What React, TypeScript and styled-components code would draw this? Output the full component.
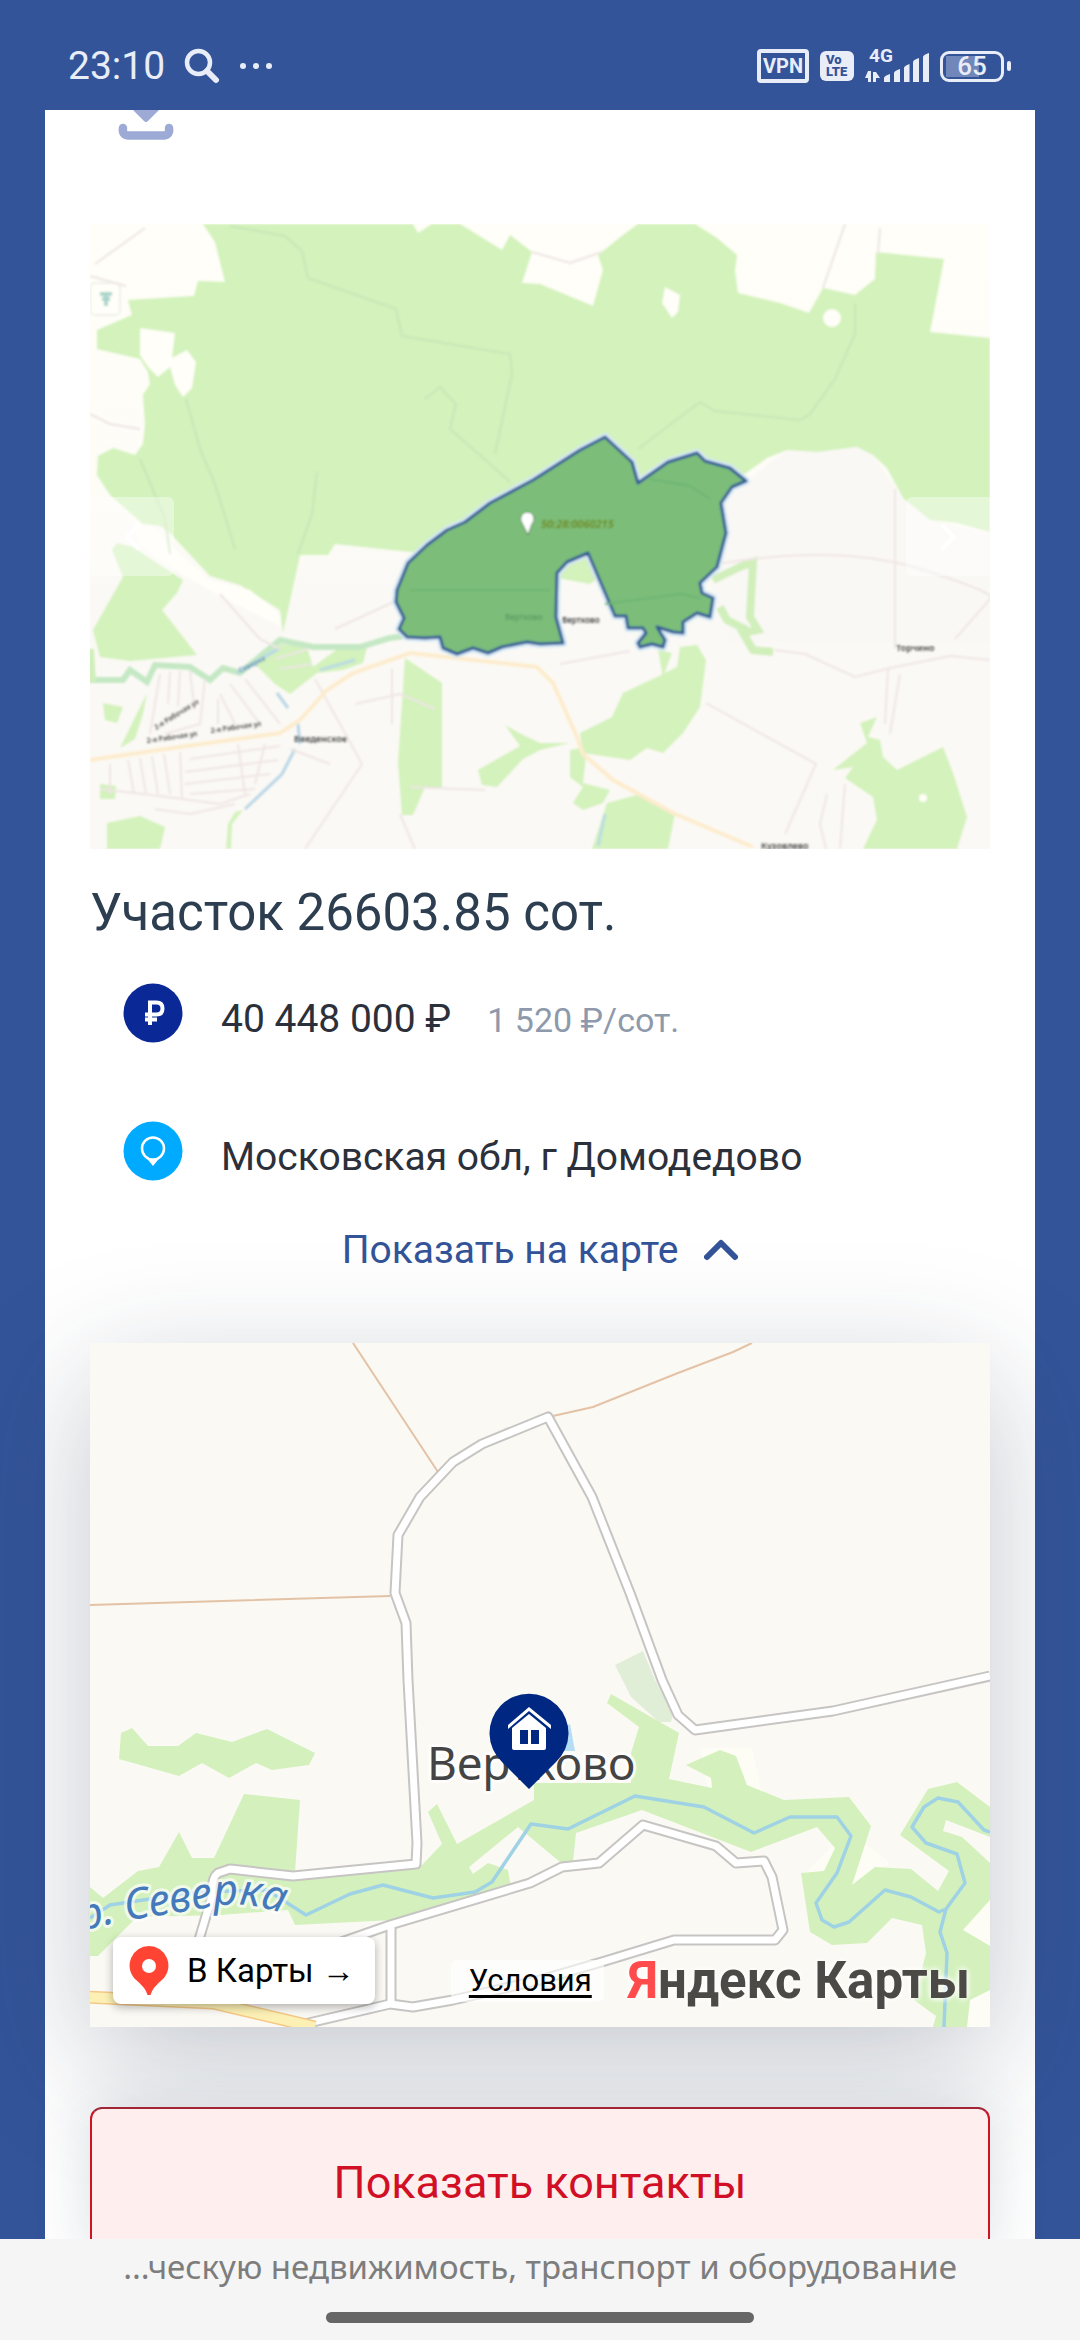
import React, { useState } from "react";
import styled, { createGlobalStyle } from "styled-components";

const GlobalStyle = createGlobalStyle`
  * { box-sizing: border-box; }
  body { margin: 0; background: #335499; font-family: Roboto, "Noto Sans", sans-serif; }
  button { font: inherit; border: 0; padding: 0; cursor: pointer; }
`;

const Screen = styled.div`
  display: flex;
  flex-direction: column;
  height: 100vh;
  background: #335499;
`;

/* ---------- status bar ---------- */

const StatusBar = styled.header`
  display: flex;
  flex: none;
  align-items: center;
  justify-content: space-between;
  height: 110px;
  padding: 22px 76px 0 68px;
  color: #e9edf8;
`;

const StatusGroup = styled.div<{ $gap: number }>`
  display: flex;
  align-items: center;
  gap: ${(p) => p.$gap}px;
`;

const Clock = styled.span`
  font-size: 39px;
  line-height: 44px;
`;

const VpnBadge = styled.span`
  width: 52px;
  border: 4px solid #e9edf8;
  border-radius: 4px;
  font-size: 20px;
  font-weight: 700;
  line-height: 26px;
  text-align: center;
`;

const VolteBadge = styled.span`
  display: flex;
  flex-direction: column;
  width: 34px;
  height: 30px;
  padding: 3px 6px;
  border-radius: 6px;
  background: #e9edf8;
  color: #335499;
  font-size: 13px;
  font-weight: 900;
  line-height: 12px;
`;

const Battery = styled.span`
  position: relative;
  display: flex;
  align-items: center;
  justify-content: center;
  width: 64px;
  height: 31px;
  border: 3px solid #e9edf8;
  border-radius: 9px;
  font-size: 26px;
  font-weight: 500;
  line-height: 26px;
  background: linear-gradient(#7186b9, #7186b9) 3px 2px / 33px 21px no-repeat;

  &::after {
    content: "";
    position: absolute;
    right: -10px;
    width: 4px;
    height: 10px;
    border-radius: 2px;
    background: #e9edf8;
  }
`;

/* ---------- listing card ---------- */

const Scroller = styled.main`
  flex: 1;
  min-height: 0;
  padding: 0 45px;
  overflow: hidden;
`;

const Card = styled.article`
  min-height: 100%;
  padding: 0 45px 90px;
  background: #fff;
`;

const Toolbar = styled.div`
  height: 114px;
  padding-left: 28px;
`;

const DownloadButton = styled.button`
  display: block;
  background: none;
`;

const Photo = styled.figure`
  position: relative;
  margin: 0;
  aspect-ratio: 900 / 625;
  overflow: hidden;

  & > svg { display: block; width: 100%; height: 100%; }
`;

const SlideButton = styled.button<{ $side: "left" | "right" }>`
  position: absolute;
  top: 273px;
  ${(p) => p.$side}: 0;
  display: flex;
  align-items: center;
  justify-content: center;
  width: 84px;
  height: 79px;
  border-radius: ${(p) => (p.$side === "left" ? "0 6px 6px 0" : "6px 0 0 6px")};
  background: rgba(255, 255, 255, 0.4);
`;

const Title = styled.h1`
  margin: 34px 0 40px;
  color: #2c3e50;
  font-size: 51px;
  font-weight: 400;
  line-height: 60px;
`;

const Facts = styled.div`
  display: flex;
  flex-direction: column;
  gap: 72px;
  padding-left: 33px;
`;

const Fact = styled.div`
  display: flex;
  gap: 38px;
`;

const FactText = styled.p`
  margin: 0;
  padding-top: 6px;
  color: #2b303b;
  font-size: 39px;
  line-height: 60px;
`;

const UnitPrice = styled.span`
  margin-left: 36px;
  color: #8e99ab;
  font-size: 34px;
  line-height: 34px;
`;

const MapToggle = styled.button`
  display: flex;
  align-items: center;
  gap: 26px;
  margin: 33px auto 63px;
  background: none;
  color: #335499;
  font-size: 39px;
  line-height: 60px;
`;

const MapPanel = styled.section`
  position: relative;
  aspect-ratio: 900 / 684;
  box-shadow: 0 36px 120px rgba(34, 48, 73, 0.27);

  & > svg { display: block; width: 100%; height: 100%; }
`;

const OpenMaps = styled.a`
  position: absolute;
  left: 23px;
  bottom: 23px;
  display: flex;
  align-items: center;
  gap: 18px;
  height: 67px;
  padding: 0 20px 0 16px;
  border-radius: 8px;
  background: #fff;
  box-shadow: 0 3px 10px rgba(0, 0, 0, 0.3);
  color: #000;
  font-size: 33px;
  text-decoration: none;
`;

const MapCredits = styled.div`
  position: absolute;
  right: 20px;
  bottom: 14px;
  display: flex;
  align-items: center;
  gap: 24px;
`;

const Terms = styled.a`
  padding: 0 12px 0 18px;
  border-radius: 6px;
  background: rgba(255, 255, 255, 0.6);
  color: #000;
  font-size: 31px;
  line-height: 42px;
  text-decoration: underline;
  text-decoration-thickness: 3px;
  text-underline-offset: 4px;
`;

const MapBrand = styled.span`
  color: #4b4a47;
  font-size: 51px;
  font-weight: 700;
  line-height: 64px;
  white-space: nowrap;
  text-shadow: 0 0 6px #fff, 0 0 6px #fff;
`;

const BrandInitial = styled.span`
  color: #ff4b4b;
`;

const ContactsButton = styled.button`
  position: relative;
  width: 100%;
  height: 150px;
  margin-top: 80px;
  border: 2px solid #cb1426;
  border-top-color: #a12535;
  border-radius: 12px;
  background: #feeeee;
  box-shadow: 0 0 60px rgba(34, 48, 73, 0.16);
  color: #d10f25;
  font-size: 45px;
`;

/* ---------- bottom bar ---------- */

const BottomBar = styled.footer`
  position: relative;
  display: flex;
  flex: none;
  flex-direction: column;
  align-items: center;
  justify-content: space-between;
  height: 101px;
  padding: 8px 0 17px;
  background: #f5f5f5;
  color: #7d7d7d;
  font-family: "Noto Sans", sans-serif;
  font-size: 33px;
  line-height: 40px;
  white-space: nowrap;
`;

const HomeHandle = styled.span`
  width: 428px;
  height: 11px;
  border-radius: 6px;
  background: #666;
`;

/* ---------- drawings ---------- */

const SearchIcon = () => (
  <svg width="36" height="36" viewBox="0 0 36 36" fill="none" stroke="#e9edf8" strokeWidth="4.5" strokeLinecap="round">
    <circle cx="14.500" cy="14.500" r="11.500" />
    <path d="M23 23L32 32" strokeWidth="6" />
  </svg>
);

const DotsIcon = () => (
  <svg width="34" height="8" viewBox="0 0 34 8" fill="#e9edf8">
    <circle cx="4" cy="4" r="3" />
    <circle cx="17" cy="4" r="3" />
    <circle cx="30" cy="4" r="3" />
  </svg>
);

const SignalIcon = () => (
  <svg width="64" height="40" viewBox="0 -4 64 40" fill="#e9edf8">
    <text x="4" y="12" fontFamily="Roboto" fontSize="19" fontWeight="700">4G</text>
    <path d="M3 21h3v11H3v-4L0 28zM8 32h3v-4h4l-4-6H8z" />
    <path d="M19 28q0-2 6-4v8h-6zM29 23q0-2 6-4v13h-6zM39 18q0-2 5.500-4v18H39zM48 12q0-2 6-4v24h-6zM58 7q0-2 6-4v29h-6z" />
  </svg>
);

const DownloadIcon = () => (
  <svg width="56" height="30" viewBox="0 0 56 30">
    <path d="M15 0H41L30 11q-2 2-4 0z" fill="#9daad6" />
    <path d="M5 18q-1 7 5 7.500H46q6-.5 5-7.500" fill="none" stroke="#9daad6" strokeWidth="8.500" strokeLinecap="round" />
  </svg>
);

const RubleIcon = () => (
  <svg width="60" height="60" viewBox="0 0 60 60">
    <circle cx="30" cy="30" r="29.500" fill="#0a2896" />
    <path d="M27 42V19.500h6.500q6 0 6 6t-6 6H22M22 36.500h12" fill="none" stroke="#fff" strokeWidth="4" />
  </svg>
);

const PlaceIcon = () => (
  <svg width="60" height="60" viewBox="0 0 60 60">
    <circle cx="30" cy="30" r="29.500" fill="#00aaff" />
    <circle cx="30" cy="27.500" r="11" fill="none" stroke="#fff" strokeWidth="2.500" />
    <path d="M23.500 37q3.500 2 6.500 2t6.500-2L30 45z" fill="#fff" />
  </svg>
);

const Chevron = ({ d, w, h, color, width }: { d: string; w: number; h: number; color: string; width: number }) => (
  <svg width={w} height={h} viewBox={`0 0 ${w} ${h}`} fill="none" stroke={color} strokeWidth={width} strokeLinecap="round" strokeLinejoin="round">
    <path d={d} />
  </svg>
);

const RedPin = () => (
  <svg width="40" height="50" viewBox="0 0 40 50">
    <path d="M20 0a19.500 19.500 0 0 1 14 33q-11 9-12.500 16h-3Q17 42 6 33A19.500 19.500 0 0 1 20 0z" fill="#ff4433" />
    <circle cx="20" cy="20" r="7" fill="#fff" />
  </svg>
);

const FOREST = [
  "113,0 125,18 135,58 108,57 104,72 38,76 42,91 7,106 7,125 50,135 58,148 60,160 53,171 55,200 53,220 45,231 23,224 8,232 7,251 20,271 53,300 70,302 80,309 120,352 150,361 190,386 193,409 210,331 238,331 245,320 330,329 500,360 663,244 677,234 697,226 727,228 767,223 783,231 797,244 813,274 840,296 867,299 900,308 900,114 840,108 854,35 786,28 785,55 765,71 733,64 719,89 690,79 648,69 645,47 647,31 627,14 605,0 548,0 533,11 508,31 513,46 503,82 450,60 432,59 442,28 420,11 412,26 370,0",
  "27,319 43,323 93,356 87,369 72,386 107,431 40,437 10,433 3,406 33,353 22,326",
  "165,440 190,420 217,423 223,443 253,421 277,423 273,439 253,446 227,449 200,470 185,460",
  "315,434 352,459 352,563 335,563 323,591 312,591 308,539",
  "415,501 433,511 450,519 480,519 450,526 433,535 407,563 392,561 388,546 430,522",
  "17,599 50,592 75,603 70,625 17,625",
  "57,469 30,524 45,515 53,490",
  "13,479 33,483 27,499 15,496",
  "10,560 26,562 25,575 10,575",
  "145,588 153,586 142,600 141,625 136,625 138,600",
  "590,423 607,421 616,436 610,483 593,509 573,529 557,524 540,536 493,529 490,509 522,493 533,469 567,453 587,443",
  "568,426 582,429 573,453",
  "517,579 547,571 585,589 578,625 502,625",
  "480,526 497,523 493,559 520,566 513,579 493,586 483,579 493,563 480,553",
  "787,493 770,499 777,519 743,546 763,543 755,554 783,573 787,596 773,625 867,625 877,593 863,549 853,523 807,546 793,533 790,516 778,513",
];

const PARCEL =
  "515,213 542,238 548,259 578,238 607,229 615,237 640,244 656,257 642,263 631,279 636,309 627,343 610,359 612,369 623,374 620,393 607,389 593,398 593,409 583,408 567,403 575,416 573,423 562,420 550,423 548,419 556,409 553,404 538,404 536,392 525,392 498,329 477,338 467,349 466,393 473,419 450,420 437,418 412,423 398,429 383,424 367,430 353,424 350,413 335,414 317,413 309,405 314,394 306,378 307,366 318,339 337,321 357,306 375,298 400,279 443,256 490,226";

const ParcelMap = () => (
  <svg viewBox="0 0 900 625" preserveAspectRatio="none" role="img" aria-label="Границы участка">
    <defs>
      <filter id="soft"><feGaussianBlur stdDeviation="0.9" /></filter>
      <linearGradient id="ground" x2="0" y2="1">
        <stop offset="0" stopColor="#fffef8" />
        <stop offset="0.45" stopColor="#fdfcf7" />
        <stop offset="0.6" stopColor="#fbf9f5" />
      </linearGradient>
    </defs>
    <rect width="900" height="625" fill="url(#ground)" />
    <g filter="url(#soft)">
      <path d="M697 226L767 223 783 231 813 274 840 296 900 310V420L640 420 600 300z" fill="#faf8f5" />
      <g fill="#d3f2bc">{FOREST.map((points) => <polygon key={points} points={points} />)}</g>
      <g fill="#fffef8">
        <polygon points="50,104 85,109 82,134 97,126 106,138 102,164 93,173 85,161 80,143 68,153 58,143 50,131" />
        <polygon points="575,63 590,71 588,88 582,94 572,79" />
        <polygon points="323,0 342,0 328,9" />
        <circle cx="742" cy="94" r="9" />
        <circle cx="833" cy="574" r="4" />
        <path d="M45 300L63 302 76 318 120 356 160 366 190 390 190 402 130 372 92 350 48 320z" />
        <rect x="0" y="59" width="30" height="32" rx="5" stroke="#eef2ea" strokeWidth="2" />
      </g>
      <path d="M10 70h12M12 75h8M16 68v14" stroke="#aad6cc" strokeWidth="4" fill="none" />
      <path d="M-10 456L33 456 40 446 57 458 65 441 100 443 120 456 133 444 150 449 190 416 223 423 270 423 300 414 315 412" fill="none" stroke="#c4e8c4" strokeWidth="6" />
      <path d="M623 356L650 343 663 338 660 393 668 406 653 409 663 426 683 428M630 383L637 396 657 406M0 425L2 458" fill="none" stroke="#d0efbb" strokeWidth="8" />
      <path d="M147 449L190 424M187 469L198 484M208 500L210 520M205 525L192 550 155 585" fill="none" stroke="#b9d6e6" strokeWidth="3" />
      <path d="M515 590L508 622M230 446L265 436" fill="none" stroke="#b9dce2" strokeWidth="3" />
      <g fill="none" stroke="#c9e6b6" strokeWidth="2">
        <path d="M140 2L195 12 212 27 218 54 306 85 312 112 420 130 422 150 405 230M420 258L400 240 360 205 366 180 350 163 335 175M96 175L110 225 125 260 145 325M50 235L75 295 80 330M227 248L222 290 208 330M610 178L625 187 710 196 720 190 745 155 765 110 765 80M610 178L548 225" />
      </g>
      <g fill="none" stroke="#eee5e4" strokeWidth="2">
        <path d="M5 40L55 4M0 52L36 62M442 28L480 39 512 28M755 0L733 64M790 4L788 30M805 265V425M627 340Q750 320 830 345T900 375L865 415M616 479L726 540 695 610M470 440L540 427M685 426L715 430 765 453 800 444 860 432 900 436M798 445L795 500M810 450L800 510M737 570L730 600 736 625M755 560L750 625M0 190L20 200 50 205M190 425L170 415 130 370M245 405L310 375" />
        <path d="M225 455L272 540 215 625M265 480L310 470 345 485M320 563L395 566M310 590L325 625M10 565L70 572 130 580 160 570M65 585L100 590 145 580" />
        <path d="M70 450L60 510M80 448L78 480M90 447L88 482M100 447L104 480M115 455L110 500 75 510M130 470L145 500M140 460L170 500M155 455L190 500M128 475L128 500M20 540V570M38 536L44 570M50 534L56 570M62 532L68 570M74 530L80 570M90 528L92 575M100 535L190 522M95 548L188 536M95 560L180 550M100 570L165 565M148 520L155 570M175 520L165 560M185 435L218 425M190 445L222 440M302 445V500M200 525L240 540" />
      </g>
      <path d="M0 536L90 523 190 509 210 496 237 466 263 449 320 429 447 443 463 459 487 513 493 530 523 556 583 589 663 623" fill="none" stroke="#fdeccd" strokeWidth="4" />
      <polygon points={PARCEL} fill="none" stroke="#d6eaf6" strokeWidth="8" strokeLinejoin="round" />
      <polygon points={PARCEL} fill="#7bbd79" stroke="#335c96" strokeWidth="3" strokeLinejoin="round" />
      <path d="M320 366H460M515 380L590 370 610 374M560 255L600 262 620 275" fill="none" stroke="#6fb573" strokeWidth="2" />
      <path d="M437 288a7 7 0 0 1 5 12l-4 11-6-12a7 7 0 0 1 5-11z" fill="#fff" stroke="#56875a" strokeWidth="1" />
      <g fontFamily="Noto Sans" fontSize="10" fontWeight="600" fill="#444">
        <text x="451" y="304" fontSize="11" fontStyle="italic" fill="#6f8600">50:28:0060215</text>
        <text x="415" y="396" fontSize="8" fill="#5e9a62">Вертково</text>
        <text x="472" y="399" fontSize="8">Вертково</text>
        <text x="204" y="518" fontSize="9">Введенское</text>
        <text x="806" y="427" fontSize="9">Торчино</text>
        <text x="671" y="625" fontSize="9">Кузовлево</text>
        <text transform="translate(66 506) rotate(-32)" fontSize="7">2-я Рабочая ул</text>
        <text transform="translate(57 519) rotate(-8)" fontSize="7">2-я Рабочая ул</text>
        <text transform="translate(121 509) rotate(-8)" fontSize="7">2-я Рабочая ул</text>
        <text transform="translate(150 449) rotate(-27)" fontSize="7" fill="#5f8fae">Северка</text>
      </g>
    </g>
  </svg>
);

const ROADS = [
  "M108 600L122 553Q121 535 128 530L140 526 203 533 326 521 327 500 318 337 316 280 305 250 308 192 330 154 363 119 392 101 458 74 502 154 540 250 572 337 588 372 605 387 743 368 900 333",
  "M237 604L300 582 440 540 472 524 509 520 553 482 626 503 646 520 674 518 682 534 693 587 685 597 584 597 515 618 450 637 363 657 323 664 300 661 210 682",
  "M301 583V660",
];

const VillageMap = () => (
  <svg viewBox="0 0 900 684" preserveAspectRatio="none" role="img" aria-label="Вертково на карте">
    <defs><path id="river-label" d="M-8 588Q20 580 53 575T120 564Q165 554 225 584" /></defs>
    <rect width="900" height="684" fill="#fbf9f4" />
    <path d="M610 405H662L672 452 618 445zM711 535L745 500 735 470 800 520 725 580zM870 590L900 550V684H875z" fill="#fefdf5" />
    <polygon points="525,322 553,308 565,337 583,370 581,379 569,379 541,354" fill="#e0eed7" />
    <g fill="#d4f1bd">
      <polygon points="31,390 42,385 58,403 88,403 106,390 142,399 177,386 225,410 219,422 182,427 166,420 139,435 112,420 89,433 29,416" />
      <polygon points="0,544 13,555 48,528 69,524 89,489 102,515 124,515 154,451 210,457 205,529 332,522 352,501 338,469 347,461 367,501 444,457 444,440 541,440 541,410 549,384 517,360 521,351 589,390 579,436 622,445 621,435 596,422 630,407 646,413 657,442 694,457 759,454 781,483 762,542 785,524 821,526 848,548 859,528 810,492 838,446 867,439 900,464 900,494 856,477 853,488 872,494 900,520 900,557 873,587 900,603 900,647 880,657 877,684 843,684 846,673 824,657 836,610 832,582 802,575 777,600 742,602 720,589 711,530 734,528 745,505 727,484 661,509 552,467 486,490 483,519 470,519 428,484 379,524 383,531 398,520 418,527 421,544 303,577 205,582 198,567 130,572 47,574 8,613 0,613" />
    </g>
    <path d="M474 384L480 381 485 408 470 408z" fill="#b5ddf4" />
    <g fill="none" stroke="#9ed2e4" strokeWidth="3.500" strokeLinejoin="round">
      <path d="M0 575L20 562 53 557 110 549 177 547 216 572 260 551 293 542 343 555 385 549 402 539 441 481 478 486 545 453 614 464 664 490 700 474 747 474 761 493 747 530 726 560 732 577 744 584 759 579 795 547 821 554 849 569 856 566 875 540 867 511 836 500 822 484 834 464 848 455 868 459 894 487 900 489" />
      <path d="M856 566L850 589 857 610 854 684" />
    </g>
    <path d="M263 0L348 129M0 262L300 253M463 73L503 64 588 30 643 9 662 0" fill="none" stroke="#e3c2a6" strokeWidth="2" />
    <g fill="none" strokeLinejoin="round">
      {ROADS.map((d) => <path key={d} d={d} stroke="#c6c5c3" strokeWidth="11" />)}
      {ROADS.map((d) => <path key={d} d={d} stroke="#fff" strokeWidth="7" />)}
      <path d="M-5 654L123 660 225 684" stroke="#f4c987" strokeWidth="13" />
      <path d="M-5 654L123 660 225 684" stroke="#fdf0b4" strokeWidth="10" />
    </g>
    <g fontFamily="Noto Sans" stroke="#fff" strokeWidth="6" strokeLinejoin="round" paintOrder="stroke">
      <text x="337" y="437" fontSize="46" fill="#444" strokeOpacity="0.800">Вертково</text>
      <text fontSize="43" fontStyle="italic" fill="#4479bb" strokeOpacity="0.700">
        <textPath href="#river-label">р. Северка</textPath>
      </text>
    </g>
    <path d="M439 446L412 419A39.500 39.500 0 1 1 466 419z" fill="#002882" />
    <g fill="#fff">
      <path d="M439 364L461 382V386L439 368 418 386V382z" />
      <path d="M439 371L456 385V405q0 2-2 2H424q-2 0-2-2V385z" />
    </g>
    <path d="M430 387h8v14h-8zM441 387h8v14h-8z" fill="#002882" />
  </svg>
);

export default function App() {
  const [mapOpen, setMapOpen] = useState(true);

  return (
    <Screen>
      <GlobalStyle />
      <StatusBar>
        <StatusGroup $gap={19}>
          <Clock>23:10</Clock>
          <SearchIcon />
          <DotsIcon />
        </StatusGroup>
        <StatusGroup $gap={11}>
          <VpnBadge>VPN</VpnBadge>
          <VolteBadge><span>Vo</span><span>LTE</span></VolteBadge>
          <SignalIcon />
          <Battery>65</Battery>
        </StatusGroup>
      </StatusBar>

      <Scroller>
        <Card>
          <Toolbar>
            <DownloadButton aria-label="Скачать"><DownloadIcon /></DownloadButton>
          </Toolbar>

          <Photo>
            <ParcelMap />
            <SlideButton $side="left" aria-label="Назад">
              <Chevron d="M14 3L3 14 14 25" w={17} h={28} color="#fff" width={4} />
            </SlideButton>
            <SlideButton $side="right" aria-label="Вперёд">
              <Chevron d="M3 3L14 14 3 25" w={17} h={28} color="#fff" width={4} />
            </SlideButton>
          </Photo>

          <Title>Участок 26603.85 сот.</Title>

          <Facts>
            <Fact>
              <RubleIcon />
              <FactText>40 448 000 ₽<UnitPrice>1 520 ₽/сот.</UnitPrice></FactText>
            </Fact>
            <Fact>
              <PlaceIcon />
              <FactText>Московская обл, г Домодедово</FactText>
            </Fact>
          </Facts>

          <MapToggle aria-expanded={mapOpen} onClick={() => setMapOpen(!mapOpen)}>
            Показать на карте
            <Chevron d={mapOpen ? "M3 18L17 4 31 18" : "M3 4L17 18 31 4"} w={34} h={22} color="#335499" width={6} />
          </MapToggle>

          {mapOpen && (
            <MapPanel>
              <VillageMap />
              <OpenMaps href="#maps"><RedPin />В Карты →</OpenMaps>
              <MapCredits>
                <Terms href="#terms">Условия</Terms>
                <MapBrand><BrandInitial>Я</BrandInitial>ндекс Карты</MapBrand>
              </MapCredits>
            </MapPanel>
          )}

          <ContactsButton>Показать контакты</ContactsButton>
        </Card>
      </Scroller>

      <BottomBar>
        <span>...ческую недвижимость, транспорт и оборудование</span>
        <HomeHandle />
      </BottomBar>
    </Screen>
  );
}
